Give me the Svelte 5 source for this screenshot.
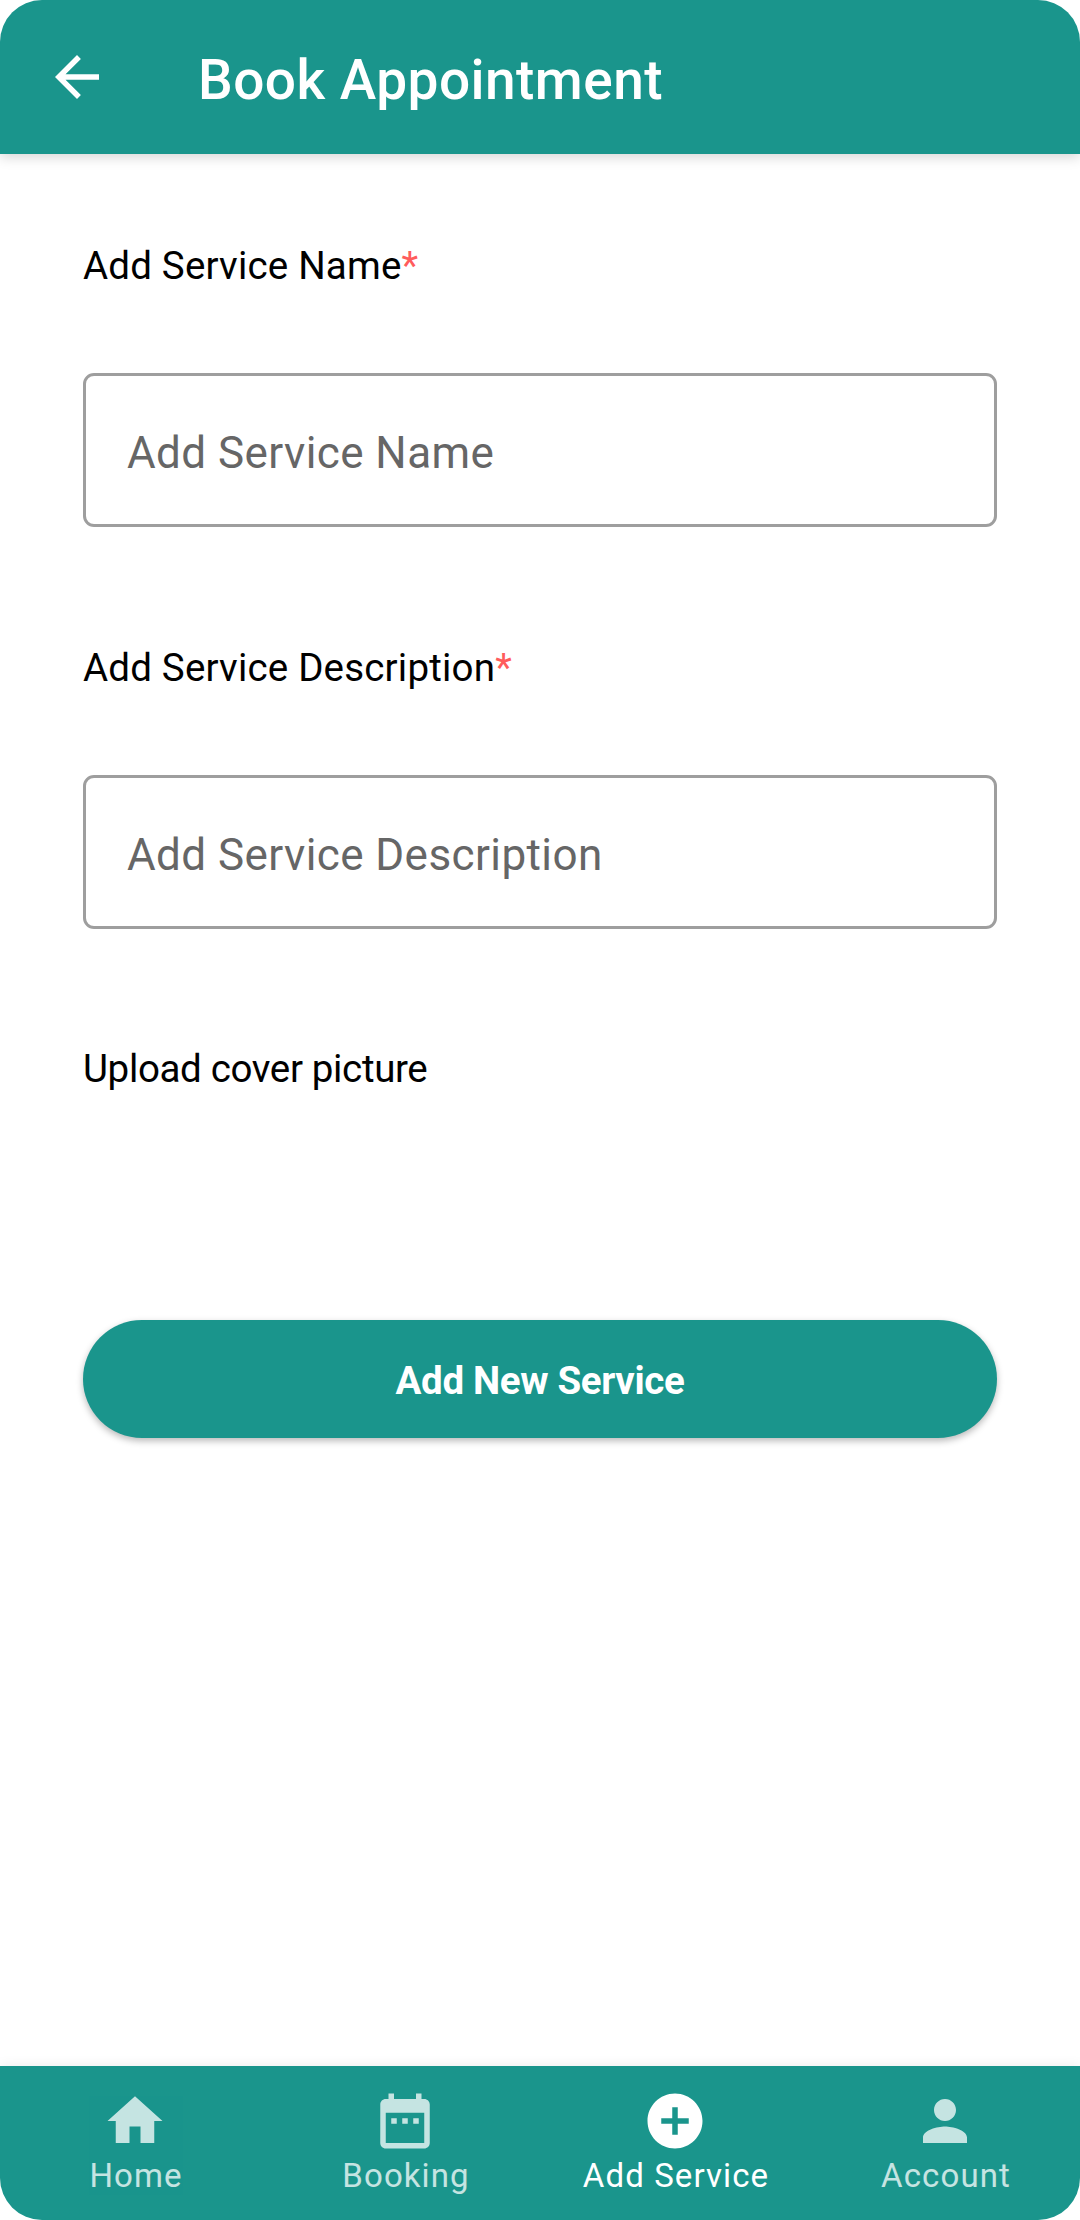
<script>
  const fields = [
    { label: 'Add Service Name' },
    { label: 'Add Service Description' }
  ];
  const tabs = [
    { name: 'Home', path: 'M10 20v-6h4v6h5v-8h3L12 3 2 12h3v8z' },
    { name: 'Booking', path: 'M9 11H7v2h2v-2zm4 0h-2v2h2v-2zm4 0h-2v2h2v-2zm2-7h-1V2h-2v2H8V2H6v2H5c-1.11 0-1.99.9-1.99 2L3 20c0 1.1.89 2 2 2h14c1.1 0 2-.9 2-2V6c0-1.1-.9-2-2-2zm0 16H5V9h14v11z' },
    { name: 'Add Service', active: true, path: 'M12 2C6.48 2 2 6.48 2 12s4.48 10 10 10 10-4.48 10-10S17.52 2 12 2zm5 11h-4v4h-2v-4H7v-2h4V7h2v4h4v2z' },
    { name: 'Account', path: 'M12 12c2.21 0 4-1.79 4-4s-1.79-4-4-4-4 1.79-4 4 1.79 4 4 4zm0 2c-2.67 0-8 1.34-8 4v2h16v-2c0-2.66-5.33-4-8-4z' }
  ];
</script>

<div class="screen">
  <header>
    <button class="back" aria-label="Back">
      <svg viewBox="0 0 24 24"><path d="M20 11H7.83l5.59-5.59L12 4l-8 8 8 8 1.41-1.41L7.83 13H20v-2z" /></svg>
    </button>
    <h1>Book Appointment</h1>
  </header>
  <main>
    {#each fields as field}
      <div class="field">
        <div class="label">{field.label}<span>*</span></div>
        <input placeholder={field.label} aria-label={field.label} />
      </div>
    {/each}
    <div class="label upload">Upload cover picture</div>
    <button class="submit">Add New Service</button>
  </main>
  <nav>
    {#each tabs as tab}
      <div class="tab" class:active={tab.active}>
        <svg viewBox="0 0 24 24"><path d={tab.path} /></svg>
        <span>{tab.name}</span>
      </div>
    {/each}
  </nav>
</div>

<style>
  .screen {
    width: 1080px;
    height: 2220px;
    display: flex;
    flex-direction: column;
    border-radius: 42px;
    overflow: hidden;
    background: #fff;
    font-family: Roboto, sans-serif;
  }
  header {
    height: 154px;
    flex: none;
    box-sizing: border-box;
    display: flex;
    align-items: center;
    padding-left: 44px;
    background: #1a958c;
    box-shadow: 0 3px 12px rgba(0, 0, 0, 0.17);
    color: #fff;
  }
  button { border: 0; padding: 0; font-family: inherit; color: #fff; background: none; }
  svg { display: block; fill: currentColor; }
  .back svg { width: 66px; height: 66px; }
  h1 { margin: 6px 0 0 88px; font-size: 55px; font-weight: 500; letter-spacing: 0.45px; line-height: 66px; }
  main { flex: 1; padding: 0 83px; }
  .field { height: 402px; }
  .label { padding-top: 89px; font-size: 38.5px; line-height: 46px; letter-spacing: 0.19px; color: #000; }
  .label span { color: #ff5c5c; }
  .label.upload { padding-top: 88px; letter-spacing: -0.35px; }
  input {
    display: block;
    box-sizing: border-box;
    width: 914px;
    height: 154px;
    margin-top: 84px;
    padding: 6px 41px 0;
    border: 3px solid #9e9e9e;
    border-radius: 11px;
    font: 44px Roboto, sans-serif;
    letter-spacing: 0.42px;
  }
  input::placeholder { color: #666; opacity: 1; }
  .submit {
    width: 914px;
    height: 118px;
    margin-top: 228px;
    padding-top: 3px;
    border-radius: 59px;
    background: #1a958c;
    box-shadow: 0 3px 7px rgba(0, 0, 0, 0.28);
    font-size: 38.5px;
    font-weight: 700;
    letter-spacing: -0.35px;
  }
  nav { height: 154px; flex: none; display: flex; background: #1a958c; box-shadow: 0 0 12px rgba(0, 0, 0, 0.08); color: #fff; }
  .tab { flex: 1; display: flex; flex-direction: column; align-items: center; padding-top: 22px; opacity: 0.75; }
  .tab.active { opacity: 1; }
  .tab svg { width: 66px; height: 66px; }
  .tab span { padding: 2px 0 0 2px; font-size: 33px; line-height: 40px; letter-spacing: 1.1px; }
</style>
